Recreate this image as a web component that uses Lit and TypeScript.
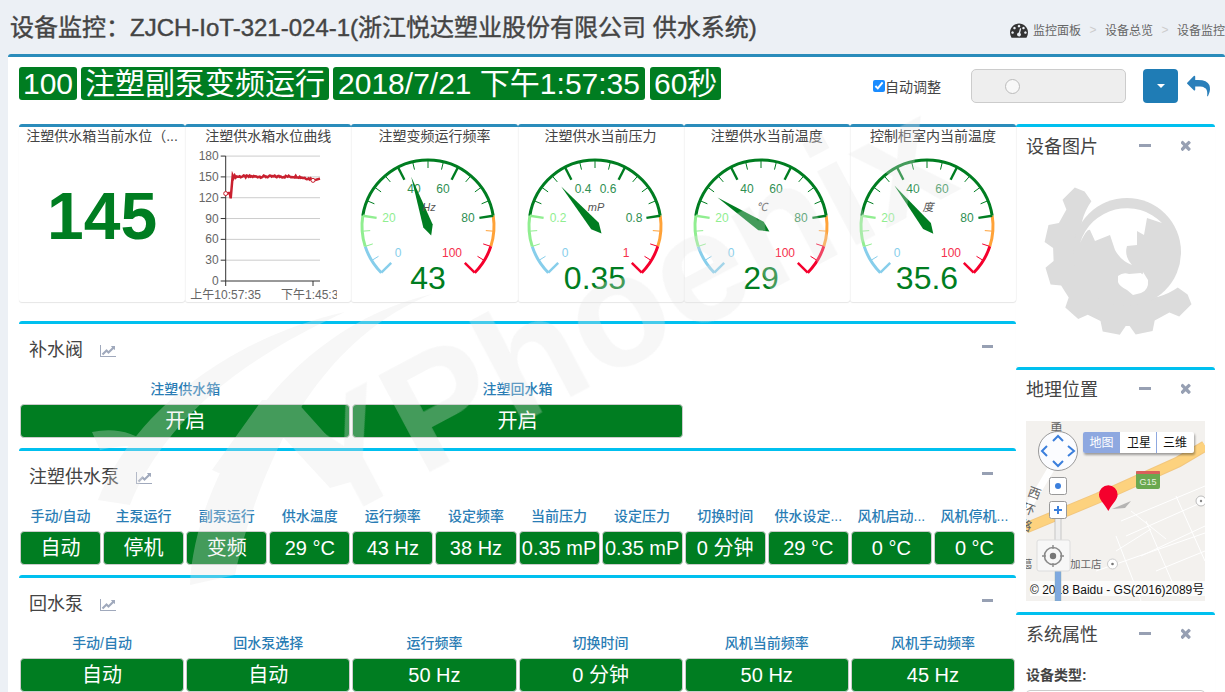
import { LitElement, html, css, svg } from "lit";
import { customElement } from "lit/decorators.js";

const GREEN = "#007d21";

// font-awesome 4 glyphs, used as plain svg paths
const ICON_REPLY =
  "M1792 1120q0 166-127 451-3 7-10.5 24t-13.5 30-13 22q-12 17-28 17-15 0-23.5-10t-8.5-25q0-9 2.5-26.5t2.5-23.5q5-68 5-123 0-101-17.5-181t-48.5-138.5-80-101-105.5-69.5-133-42.5-154-21.5-175.5-6h-224v256q0 26-19 45t-45 19-45-19l-512-512q-19-19-19-45t19-45l512-512q19-19 45-19t45 19 19 45v256h224q713 0 875 403 53 134 53 333z";
const ICON_TIMES =
  "M1298 1314q0 40-28 68l-136 136q-28 28-68 28t-68-28l-294-294-294 294q-28 28-68 28t-68-28l-136-136q-28-28-28-68t28-68l294-294-294-294q-28-28-28-68t28-68l136-136q28-28 68-28t68 28l294 294 294-294q28-28 68-28t68 28l136 136q28 28 28 68t-28 68l-294 294 294 294q28 28 28 68z";
const ICON_DASH =
  "M384 1152q0-53-37.5-90.5t-90.5-37.5-90.5 37.5-37.5 90.5 37.5 90.5 90.5 37.5 90.5-37.5 37.5-90.5zm192-448q0-53-37.5-90.5t-90.5-37.5-90.5 37.5-37.5 90.5 37.5 90.5 90.5 37.5 90.5-37.5 37.5-90.5zm428 481l101-382q6-26-7.5-48.5t-38.5-29.5-48 6.5-30 39.5l-101 382q-60 5-107 43.5t-63 98.5q-20 77 20 146t117 89 146-20 89-117q16-60-6-117t-72-91zm660-33q0-53-37.5-90.5t-90.5-37.5-90.5 37.5-37.5 90.5 37.5 90.5 90.5 37.5 90.5-37.5 37.5-90.5zm-640-640q0-53-37.5-90.5t-90.5-37.5-90.5 37.5-37.5 90.5 37.5 90.5 90.5 37.5 90.5-37.5 37.5-90.5zm448 192q0-53-37.5-90.5t-90.5-37.5-90.5 37.5-37.5 90.5 37.5 90.5 90.5 37.5 90.5-37.5 37.5-90.5zm320 448q0 261-141 483-19 29-54 29h-1402q-35 0-54-29-141-221-141-483 0-182 71-348t191-286 286-191 348-71 348 71 286 191 191 286 71 348z";
const ICON_LINE =
  "M2048 1536v128h-2048v-1536h128v1408h1920zm-128-1248v435q0 21-19.5 29.5t-35.5-7.5l-121-121-633 633q-10 10-23 10t-23-10l-233-233-416 416-192-192 585-585q10-10 23-10t23 10l233 233 464-464-121-121q-16-16-7.5-35.5t29.5-19.5h435q14 0 23 9t9 23z";

const polar = (r: number, deg: number, cx = 0, cy = 0) => {
  const a = (deg * Math.PI) / 180;
  return [cx + r * Math.sin(a), cy - r * Math.cos(a)];
};
const f = (n: number) => n.toFixed(1);

interface Gauge {
  title: string;
  unit: string;
  value: string;
  pct: number;
  labels: string[];
  lx: number[];
}

const GAUGES: Gauge[] = [
  { title: "注塑变频运行频率", unit: "Hz", value: "43", pct: 43, labels: ["0", "20", "40", "60", "80", "100"], lx: [-30, -39, -14, 15, 40, 24] },
  { title: "注塑供水当前压力", unit: "mP", value: "0.35", pct: 35, labels: ["0", "0.2", "0.4", "0.6", "0.8", "1"], lx: [-30, -37, -12, 13, 39, 31] },
  { title: "注塑供水当前温度", unit: "℃", value: "29", pct: 29, labels: ["0", "20", "40", "60", "80", "100"], lx: [-30, -39, -14, 15, 40, 24] },
  { title: "控制柜室内当前温度", unit: "度", value: "35.6", pct: 35.6, labels: ["0", "20", "40", "60", "80", "100"], lx: [-30, -39, -14, 15, 40, 24] },
];

const segColor = (p: number) =>
  p < 10 ? "#87ceeb" : p < 20 ? "#90ee90" : p < 80 ? GREEN : p < 90 ? "#ffa238" : "#f5002d";
const labelColor = (i: number) =>
  i === 0 ? "#87ceeb" : i === 1 ? "#90ee90" : i === 5 ? "#f5304d" : "#2f8f52";

const SEGS = [
  [0, 10],
  [10, 20],
  [20, 80],
  [80, 90],
  [90, 100],
];

function gaugeSvg(g: Gauge) {
  const cx = 77;
  const cy = 81;
  const R = 66;
  const ang = (p: number) => -135 + (p * 270) / 100;
  const arcs = SEGS.map(([a, b]) => {
    const [x1, y1] = polar(R, ang(a), cx, cy);
    const [x2, y2] = polar(R, ang(b), cx, cy);
    const large = (b - a) * 2.7 > 180 ? 1 : 0;
    return svg`<path d="M${f(x1)} ${f(y1)}A${R} ${R} 0 ${large} 1 ${f(x2)} ${f(y2)}" fill="none" stroke=${segColor(a)} stroke-width="3"/>`;
  });
  const ticks = [];
  for (let p = 0; p <= 100; p += 5) {
    const major = p % 20 === 0;
    const [x1, y1] = polar(R, ang(p), cx, cy);
    const [x2, y2] = polar(R - (major ? 14 : 8), ang(p), cx, cy);
    const col = segColor(p === 100 ? 99 : p === 20 ? 19 : p === 80 ? 79 : p);
    ticks.push(
      svg`<line x1=${f(x1)} y1=${f(y1)} x2=${f(x2)} y2=${f(y2)} stroke=${col} stroke-width=${major ? 2.4 : 1}/>`,
    );
  }
  const ys = [108, 73, 44, 44, 73, 108];
  const labels = g.labels.map(
    (l, i) =>
      svg`<text class="g-label" x=${cx + g.lx[i]} y=${ys[i] + 4} fill=${labelColor(i)}>${l}</text>`,
  );
  const a = ang(g.pct);
  const [tx, ty] = polar(52, a, cx, cy);
  const [lx, ly] = polar(5, a - 90, cx, cy);
  const [rx, ry] = polar(5, a + 90, cx, cy);
  const [bx, by] = polar(-10, a, cx, cy);
  return html`<svg class="gauge" viewBox="0 0 166 157" width="166" height="157">
    ${arcs}${ticks}${labels}
    <polygon points="${f(tx)},${f(ty)} ${f(lx)},${f(ly)} ${f(bx)},${f(by)} ${f(rx)},${f(ry)}" fill=${GREEN} />
    <text class="g-unit" x=${cx + 1} y="66">${g.unit}</text>
    <text class="g-value" x=${cx} y="144">${g.value}</text>
  </svg>`;
}

function levelChart() {
  const x0 = 40.7;
  const x1 = 135;
  const yOf = (v: number) => 136 - v * 0.694;
  const pts: number[][] = [
    [x0, yOf(126)],
    [x0 + 4, yOf(127)],
    [x0 + 5, yOf(119)],
    [x0 + 7, yOf(152)],
  ];
  for (let x = x0 + 8, i = 0; x < x1 - 7; x += 1, i++) {
    const drift = x > 112 ? ((x - 112) / 16) * 4 : 0;
    // rough noise so the line looks like sampled data
    const noise = Math.sin(i * 12.9898) * 43758.5453;
    pts.push([x, yOf(150.5 + (noise - Math.floor(noise) - 0.5) * 3.2 - drift)]);
  }
  pts.push([x1 - 7, yOf(145)], [x1 - 4, yOf(146)], [x1, yOf(147.5)]);
  const grid = [0, 30, 60, 90, 120, 150, 180];
  return html`<svg class="chart" viewBox="0 0 152 157" width="152" height="157">
    ${grid.map((v) =>
      v === 0
        ? ""
        : svg`<line x1=${x0} x2=${x1} y1=${yOf(v)} y2=${yOf(v)} stroke="#ccc"/>`,
    )}
    <line x1=${x0} x2=${x0} y1="11" y2="136" stroke="#333" />
    <line x1=${x0} x2=${x1} y1="136" y2="136" stroke="#333" />
    <line x1=${x0} x2=${x0} y1="136" y2="141" stroke="#333" />
    <line x1="128" x2="128" y1="136" y2="141" stroke="#333" />
    ${grid.map(
      (v) =>
        svg`<line x1=${x0 - 5} x2=${x0} y1=${yOf(v)} y2=${yOf(v)} stroke="#333"/>
        <text class="c-y" x=${x0 - 7} y=${yOf(v) + 4}>${v}</text>`,
    )}
    <text class="c-x" x=${x0} y="154">上午10:57:35</text>
    <text class="c-x" x="128" y="154">下午1:45:35</text>
    <polyline points=${pts.map((p) => `${f(p[0])},${f(p[1])}`).join(" ")} fill="none" stroke="#c9202f" stroke-width="2.5" />
    <circle cx=${x0} cy=${yOf(126)} r="2" fill="#fff" stroke="#c9202f" />
    <circle cx="128" cy=${yOf(145)} r="2" fill="#fff" stroke="#c9202f" />
  </svg>`;
}

// gear round the globe: teeth only on the left and bottom part of the ring
function gearPath() {
  const inner = 62;
  const valley = 74;
  const tip = 83;
  const teeth = [-45, -77, -107, -138, -169, 168, 135];
  const start = polar(inner, -35);
  let d = `M${f(start[0])} ${f(start[1])}`;
  const pt = (r: number, a: number) => {
    const p = polar(r, a);
    return `L${f(p[0])} ${f(p[1])}`;
  };
  d += pt(valley, -35);
  for (const t of teeth) {
    const a = t < 0 ? t : t - 360;
    d += pt(valley, a + 10) + pt(tip, a + 6) + pt(tip, a - 6) + pt(valley, a - 10);
  }
  d += pt(inner, 125 - 360);
  d += `A${inner} ${inner} 0 0 1 ${f(start[0])} ${f(start[1])}Z`;
  return d;
}

function deviceImage() {
  return html`<svg class="gear" viewBox="-92 -70 184 160" width="184" height="160">
    <path d=${gearPath()} fill="#dcdcdc" />
    <circle r="54" fill="#dcdcdc" />
    <path
      d="M-47 -9 Q-40 -24 -37 -22 L-32 -11 L-17 -17 L-12 -2 Q-6 9 5 13 Q-3 4 0 -6 L10 -7 L10 -21 L17 -17 L20 -34 L35 -29 A49 49 0 0 0 -47 -9Z"
      fill="#fff"
    />
    <path
      d="M-9 24 Q-4 20 2 22 L14 21 Q16 24 16 20 L21 28 Q22 38 14 41 L6 43 L0 38 Q-8 34 -9 30Z"
      fill="#fff"
    />
  </svg>`;
}

function mapSvg() {
  return html`<svg class="map" viewBox="0 0 179 180" width="179" height="180">
    <rect width="179" height="180" fill="#f3f1ee" />
    <g fill="none" stroke="#fff" stroke-width="1">
      <path d="M100 115L179 80M115 135L179 105M130 150L179 130M95 100L179 65M150 75L179 140M120 100L150 170M90 115L115 180M105 90L140 118" />
      <path d="M90 130L125 108M70 150L179 112" />
    </g>
    <path d="M32 36L0 90" fill="none" stroke="#fff" stroke-width="7" />
    <path d="M0 107L72 77L152 41L179 25" fill="none" stroke="#f2c77f" stroke-width="11" />
    <path d="M0 107L72 77L152 41L179 25" fill="none" stroke="#fdd27e" stroke-width="9" />
    <rect x="110" y="50" width="24" height="18" rx="2" fill="#6aa84f" />
    <rect x="110" y="50" width="24" height="3" rx="1" fill="#d9605a" />
    <text class="m-g15" x="122" y="64">G15</text>
    <circle cx="175" cy="80" r="5" fill="#fff" stroke="#bbb" />
    <circle cx="175" cy="80" r="1.2" fill="#888" />
    <text class="m-road m-small" x="-4" y="147">葛</text>
    <text class="m-road m-small" x="44" y="147">加工店</text>
    <circle cx="86.5" cy="143" r="5" fill="#fff" stroke="#ccc" />
    <circle cx="86.5" cy="143" r="1.3" fill="#777" />
    <text class="m-road" transform="rotate(20 9 72)" x="2" y="77">西</text>
    <text class="m-road" transform="rotate(20 3 88)" x="-4" y="93">环</text>
    <text class="m-road" transform="rotate(20 0 104)" x="-7" y="109">路</text>
    <text class="m-road" x="24" y="11">勇</text>
    <path d="M86 88L105 80L99 87Z" fill="#777" opacity=".5" />
    <path d="M82.3 90C78 82 73 79 73 73.5A9.3 9.3 0 0 1 91.6 73.5C91.6 79 86.6 82 82.3 90Z" fill="#f5002d" />
    <rect x="57" y="11" width="111" height="21" rx="2" fill="#fff" class="m-shadow" />
    <path d="M59 11H94V32H59a2 2 0 0 1-2-2V13a2 2 0 0 1 2-2Z" fill="#8ea8e0" />
    <line x1="130.5" x2="130.5" y1="11" y2="32" stroke="#8ea8e0" />
    <text class="m-tab m-on" x="75.5" y="25.5">地图</text>
    <text class="m-tab" x="113" y="25.5">卫星</text>
    <text class="m-tab" x="149" y="25.5">三维</text>
    <rect y="160" x="4" width="175" height="15" fill="#fff" opacity=".75" />
    <text class="m-copy" x="4" y="173">© 2018 Baidu - GS(2016)2089号</text>
    <rect x="29" y="97" width="6" height="33" fill="#eee" stroke="#aaa" stroke-width=".6" />
    <rect x="29" y="150" width="6" height="30" fill="#7fa9e0" stroke="#8aa" stroke-width=".4" />
    <circle cx="32" cy="30" r="19.5" fill="#fbfcff" stroke="#999" />
    <g fill="none" stroke="#3b7fdc" stroke-width="2">
      <path d="M27 20L32 15L37 20M27 40L32 45L37 40M21 25L16 30L21 35M42 25L48 30L42 35" />
    </g>
    <rect x="23.5" y="56.5" width="17" height="17" rx="2" fill="#fff" stroke="#999" />
    <circle cx="32" cy="65" r="3" fill="#3b7fdc" />
    <rect x="23.5" y="80.5" width="17" height="17" rx="2" fill="#fff" stroke="#999" />
    <path d="M32 85V93M28 89H36" stroke="#3b7fdc" stroke-width="2" />
    <rect x="11" y="119" width="33" height="31" rx="2" fill="#f7f7f7" stroke="#ddd" />
    <circle cx="27" cy="135" r="8.5" fill="none" stroke="#8a8a8a" stroke-width="1.6" />
    <circle cx="27" cy="135" r="3.2" fill="#777" />
    <path d="M27 124V128M27 142V146M16 135H20M34 135H38" stroke="#8a8a8a" stroke-width="1.4" />
  </svg>`;
}

const tile = (title: string, content: unknown) => html`<div class="tile">
  <div class="tile-title">${title}</div>
  ${content}
</div>`;

const cell = (label: string, value: string) => html`<div class="cell">
  <div class="cell-label">${label}</div>
  <div class="cell-value">${value}</div>
</div>`;

const PUMP: [string, string][] = [
  ["手动/自动", "自动"],
  ["主泵运行", "停机"],
  ["副泵运行", "变频"],
  ["供水温度", "29 °C"],
  ["运行频率", "43 Hz"],
  ["设定频率", "38 Hz"],
  ["当前压力", "0.35 mP"],
  ["设定压力", "0.35 mP"],
  ["切换时间", "0 分钟"],
  ["供水设定...", "29 °C"],
  ["风机启动...", "0 °C"],
  ["风机停机...", "0 °C"],
];
const RETURN: [string, string][] = [
  ["手动/自动", "自动"],
  ["回水泵选择", "自动"],
  ["运行频率", "50 Hz"],
  ["切换时间", "0 分钟"],
  ["风机当前频率", "50 Hz"],
  ["风机手动频率", "45 Hz"],
];

@customElement("app-root")
export class AppRoot extends LitElement {
  static styles = css`
    :host {
      display: block;
      position: relative;
      width: 1225px;
      height: 692px;
      overflow: hidden;
      background: #ecf0f5;
      color: #444;
      font-family: "Liberation Sans", "Noto Sans CJK SC", sans-serif;
    }
    .header {
      display: flex;
      align-items: center;
      box-sizing: border-box;
      height: 54px;
      padding: 0 0 4px 10px;
      white-space: nowrap;
    }
    .header h1 {
      margin: 0;
      font-size: 24px;
      font-weight: 400;
      color: #444;
      -webkit-text-stroke: 0.4px #444;
    }
    .crumbs {
      display: flex;
      align-items: center;
      margin-left: auto;
      padding-top: 9px;
      font-size: 12px;
      color: #666;
    }
    .crumbs svg {
      width: 18px;
      height: 18px;
      margin-right: 5px;
      fill: #333;
    }
    .crumbs i {
      font-style: normal;
      color: #ccc;
      margin: 0 8px;
      width: 8px;
      text-align: center;
    }
    .box {
      margin-left: 8px;
      height: 638px;
      box-sizing: border-box;
      background: #fff;
      border-top: 3px solid #2a8cbb;
      border-radius: 3px 3px 0 0;
    }
    .status {
      display: flex;
      align-items: flex-start;
      height: 67px;
      box-sizing: border-box;
      padding: 10px 15px 0 11px;
    }
    .badge {
      background: #007d21;
      color: #fff;
      font-size: 30px;
      line-height: 33px;
      height: 33px;
      padding: 0 4px;
      margin-right: 4px;
      border-radius: 3px;
      white-space: nowrap;
    }
    .badge.date {
      padding: 0 5px;
      margin-right: 5px;
    }
    .controls {
      display: flex;
      align-items: center;
      margin-left: auto;
      height: 34px;
      padding-top: 2px;
    }
    .auto {
      display: flex;
      align-items: center;
      font-size: 14px;
      color: #444;
      margin-right: 30px;
    }
    .auto input {
      margin: 0;
      width: 12px;
      height: 12px;
      accent-color: #1a8cff;
    }
    .toggle {
      display: flex;
      align-items: center;
      box-sizing: border-box;
      width: 155px;
      height: 34px;
      padding-left: 33px;
      background: #eee;
      border: 1px solid #ccc;
      border-radius: 5px;
      margin-right: 17px;
    }
    .toggle span {
      width: 13px;
      height: 13px;
      border-radius: 50%;
      background: #f8f8f8;
      border: 1px solid #bbb;
    }
    .drop {
      display: flex;
      align-items: center;
      justify-content: center;
      width: 35px;
      height: 34px;
      background: #1f7cb5;
      border-radius: 4px;
      margin-right: 9px;
    }
    .drop span {
      width: 0;
      height: 0;
      border: 4px solid transparent;
      border-top-color: #fff;
      border-bottom-width: 0;
    }
    .reply {
      width: 23px;
      height: 23px;
      fill: #2a7fba;
    }
    .grid {
      display: grid;
      grid-template-columns: 997px 199px;
      margin-left: 11px;
    }
    .tiles {
      display: grid;
      grid-template-columns: repeat(6, 1fr);
      height: 178px;
      margin-bottom: 19px;
    }
    .tile {
      box-sizing: border-box;
      height: 178px;
      border-top: 3px solid #2a8cbb;
      border-radius: 3px;
      box-shadow: 0 1px 1px rgba(0, 0, 0, 0.1), 1px 0 0 rgba(0, 0, 0, 0.03);
      overflow: hidden;
    }
    .tile-title {
      box-sizing: border-box;
      height: 18px;
      line-height: 18px;
      font-size: 14px;
      color: #444;
      text-align: center;
      white-space: nowrap;
    }
    .big {
      text-align: center;
      font-size: 66px;
      font-weight: 700;
      line-height: 66px;
      margin-top: 38px;
      color: #007d21;
    }
    .gauge,
    .chart {
      display: block;
    }
    .g-label {
      font-size: 12px;
      text-anchor: middle;
    }
    .g-unit {
      font-size: 11px;
      font-style: italic;
      text-anchor: middle;
      fill: #555;
    }
    .g-value {
      font-size: 32px;
      text-anchor: middle;
      fill: #007d21;
    }
    .c-y {
      font-size: 12px;
      text-anchor: end;
      fill: #666;
    }
    .c-x {
      font-size: 12px;
      text-anchor: middle;
      fill: #666;
    }
    .panel {
      box-sizing: border-box;
      height: 127px;
      border-top: 3px solid #00c0ef;
      border-radius: 3px;
    }
    .panel-head {
      display: flex;
      align-items: center;
      height: 50px;
      padding: 0 23px 0 10px;
      font-size: 18px;
      color: #444;
    }
    .panel-head b {
      font-weight: 400;
      margin-top: -2px;
    }
    .line-icon {
      width: 16px;
      height: 14px;
      margin: 4px 0 0 17px;
      fill: #a0a9bc;
    }
    .minus {
      width: 11px;
      height: 3px;
      margin-left: auto;
      background: #97a0b3;
      margin-top: -6px;
    }
    .cells {
      display: grid;
    }
    .cols-3 {
      grid-template-columns: repeat(3, 1fr);
    }
    .cols-6 {
      grid-template-columns: repeat(6, 1fr);
    }
    .cols-12 {
      grid-template-columns: repeat(12, 1fr);
    }
    .cell {
      min-width: 0;
      text-align: center;
    }
    .cell-label {
      height: 30px;
      line-height: 30px;
      font-size: 14px;
      font-weight: 500;
      color: #2a7db5;
      white-space: nowrap;
    }
    .cell-value {
      box-sizing: border-box;
      height: 34px;
      line-height: 32px;
      margin: 0 1px;
      font-size: 20px;
      color: #fff;
      background: #007d21;
      border: 1px solid #ccc;
      border-radius: 4px;
      white-space: nowrap;
      overflow: hidden;
    }
    .side {
      display: flex;
      flex-direction: column;
    }
    .side-card {
      box-sizing: border-box;
      border-top: 3px solid #00c0ef;
      border-radius: 3px;
      box-shadow: 0 1px 1px rgba(0, 0, 0, 0.06);
      overflow: hidden;
      flex: none;
    }
    .side-card.image {
      height: 243px;
    }
    .side-card.location {
      height: 245px;
    }
    .side-card.props {
      height: 120px;
    }
    .side-head {
      display: flex;
      align-items: center;
      height: 36px;
      padding: 0 24px 0 10px;
      font-size: 18px;
      color: #444;
    }
    .side-head .minus {
      margin-left: auto;
      margin-top: 0;
      width: 12px;
    }
    .side-head svg {
      width: 10px;
      height: 11px;
      margin-left: 30px;
      fill: #97a0b3;
    }
    .gear {
      display: block;
      margin: 19px 0 0 19px;
    }
    .map {
      display: block;
      margin: 15px 0 0 10px;
    }
    .m-road {
      font-size: 13px;
      fill: #666;
    }
    .m-small {
      font-size: 10.5px;
    }
    .m-g15 {
      font-size: 9px;
      text-anchor: middle;
      fill: #e8f2e0;
    }
    .m-tab {
      font-size: 12px;
      text-anchor: middle;
      fill: #111;
    }
    .m-tab.m-on {
      fill: #fff;
    }
    .m-shadow {
      filter: drop-shadow(1px 2px 1px rgba(0, 0, 0, 0.35));
    }
    .m-copy {
      font-size: 12px;
      fill: #111;
    }
    .prop-label {
      margin: 14px 0 5px 10px;
      font-size: 14px;
      line-height: 20px;
      font-weight: 700;
    }
    .prop-input {
      height: 30px;
      margin: 0 10px;
      border: 1px solid #ccc;
      border-radius: 4px;
    }
    .watermark {
      position: absolute;
      left: 0;
      top: 0;
      pointer-events: none;
    }
    .wm {
      opacity: 0.3;
      fill: #e4e4e4;
    }
    .wm-text {
      font-size: 158px;
      font-weight: 700;
    }
  `;

  private panelHead(title: string) {
    return html`<div class="panel-head">
      <b>${title}</b>
      <svg class="line-icon" viewBox="0 0 2048 1792"><path d=${ICON_LINE} /></svg>
      <span class="minus"></span>
    </div>`;
  }

  private sideHead(title: string) {
    return html`<div class="side-head">
      <span>${title}</span>
      <span class="minus"></span>
      <svg viewBox="180 270 1130 1280"><path d=${ICON_TIMES} /></svg>
    </div>`;
  }

  render() {
    return html`
      <div class="header">
        <h1>设备监控：ZJCH-IoT-321-024-1(浙江悦达塑业股份有限公司 供水系统)</h1>
        <div class="crumbs">
          <svg viewBox="0 0 1792 1792"><path d=${ICON_DASH} /></svg>
          <span>监控面板</span><i>&gt;</i><span>设备总览</span><i>&gt;</i><span>设备监控</span>
        </div>
      </div>
      <div class="box">
        <div class="status">
          <span class="badge">100</span>
          <span class="badge">注塑副泵变频运行</span>
          <span class="badge date">2018/7/21 下午1:57:35</span>
          <span class="badge">60秒</span>
          <div class="controls">
            <label class="auto"><input type="checkbox" checked />自动调整</label>
            <div class="toggle"><span></span></div>
            <div class="drop"><span></span></div>
            <svg class="reply" viewBox="0 0 1792 1792"><path d=${ICON_REPLY} /></svg>
          </div>
        </div>
        <div class="grid">
          <div>
            <div class="tiles">
              ${tile("注塑供水箱当前水位（...", html`<div class="big">145</div>`)}
              ${tile("注塑供水箱水位曲线", levelChart())}
              ${GAUGES.map((g) => tile(g.title, gaugeSvg(g)))}
            </div>
            <div class="panel">
              ${this.panelHead("补水阀")}
              <div class="cells cols-3">
                ${cell("注塑供水箱", "开启")}${cell("注塑回水箱", "开启")}
              </div>
            </div>
            <div class="panel">
              ${this.panelHead("注塑供水泵")}
              <div class="cells cols-12">${PUMP.map(([l, v]) => cell(l, v))}</div>
            </div>
            <div class="panel">
              ${this.panelHead("回水泵")}
              <div class="cells cols-6">${RETURN.map(([l, v]) => cell(l, v))}</div>
            </div>
          </div>
          <div class="side">
            <div class="side-card image">${this.sideHead("设备图片")}${deviceImage()}</div>
            <div class="side-card location">${this.sideHead("地理位置")}${mapSvg()}</div>
            <div class="side-card props">
              ${this.sideHead("系统属性")}
              <div class="prop-label">设备类型:</div>
              <div class="prop-input"></div>
            </div>
          </div>
        </div>
      </div>
      <svg class="watermark" width="1225" height="692" viewBox="0 0 1225 692">
        <g class="wm">
          <path d="M190 585C195 480 280 330 432 294C330 335 265 440 235 575Z" />
          <path d="M98 500C130 420 220 340 345 312C240 360 165 420 130 505Z" />
          <path d="M92 432Q125 425 150 445Q120 445 100 450Z" />
          <path d="M262 400L295 400L365 478L330 488L272 425L235 480L212 470Z" />
          <text class="wm-text" transform="rotate(-28 327 526)" x="327" y="526">YPhoenix</text>
        </g>
      </svg>
    `;
  }
}
